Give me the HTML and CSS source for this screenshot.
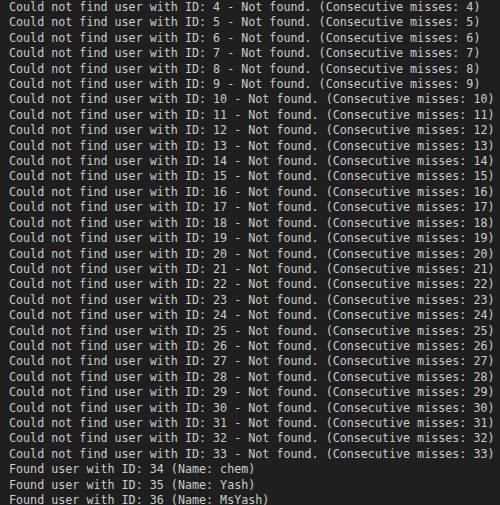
FILE: index.html
```html
<!DOCTYPE html>
<html>
<head>
<meta charset="utf-8">
<link rel="stylesheet" href="styles.css">
</head>
<body>
<pre class="terminal">Could not find user with ID: 4 - Not found. (Consecutive misses: 4)
Could not find user with ID: 5 - Not found. (Consecutive misses: 5)
Could not find user with ID: 6 - Not found. (Consecutive misses: 6)
Could not find user with ID: 7 - Not found. (Consecutive misses: 7)
Could not find user with ID: 8 - Not found. (Consecutive misses: 8)
Could not find user with ID: 9 - Not found. (Consecutive misses: 9)
Could not find user with ID: 10 - Not found. (Consecutive misses: 10)
Could not find user with ID: 11 - Not found. (Consecutive misses: 11)
Could not find user with ID: 12 - Not found. (Consecutive misses: 12)
Could not find user with ID: 13 - Not found. (Consecutive misses: 13)
Could not find user with ID: 14 - Not found. (Consecutive misses: 14)
Could not find user with ID: 15 - Not found. (Consecutive misses: 15)
Could not find user with ID: 16 - Not found. (Consecutive misses: 16)
Could not find user with ID: 17 - Not found. (Consecutive misses: 17)
Could not find user with ID: 18 - Not found. (Consecutive misses: 18)
Could not find user with ID: 19 - Not found. (Consecutive misses: 19)
Could not find user with ID: 20 - Not found. (Consecutive misses: 20)
Could not find user with ID: 21 - Not found. (Consecutive misses: 21)
Could not find user with ID: 22 - Not found. (Consecutive misses: 22)
Could not find user with ID: 23 - Not found. (Consecutive misses: 23)
Could not find user with ID: 24 - Not found. (Consecutive misses: 24)
Could not find user with ID: 25 - Not found. (Consecutive misses: 25)
Could not find user with ID: 26 - Not found. (Consecutive misses: 26)
Could not find user with ID: 27 - Not found. (Consecutive misses: 27)
Could not find user with ID: 28 - Not found. (Consecutive misses: 28)
Could not find user with ID: 29 - Not found. (Consecutive misses: 29)
Could not find user with ID: 30 - Not found. (Consecutive misses: 30)
Could not find user with ID: 31 - Not found. (Consecutive misses: 31)
Could not find user with ID: 32 - Not found. (Consecutive misses: 32)
Could not find user with ID: 33 - Not found. (Consecutive misses: 33)
Found user with ID: 34 (Name: chem)
Found user with ID: 35 (Name: Yash)
Found user with ID: 36 (Name: MsYash)</pre>
</body>
</html>
```
FILE: styles.css
```css
html, body {
  margin: 0;
  padding: 0;
  background: #1f1f1f;
  height: 100%;
  overflow: hidden;
}
.terminal {
  margin: 0;
  padding: 0 0 0 9px;
  font-family: "DejaVu Sans Mono", "Liberation Mono", monospace;
  font-size: 11.7px;
  line-height: 15.4px;
  color: #cccccc;
  white-space: pre;
}
```
